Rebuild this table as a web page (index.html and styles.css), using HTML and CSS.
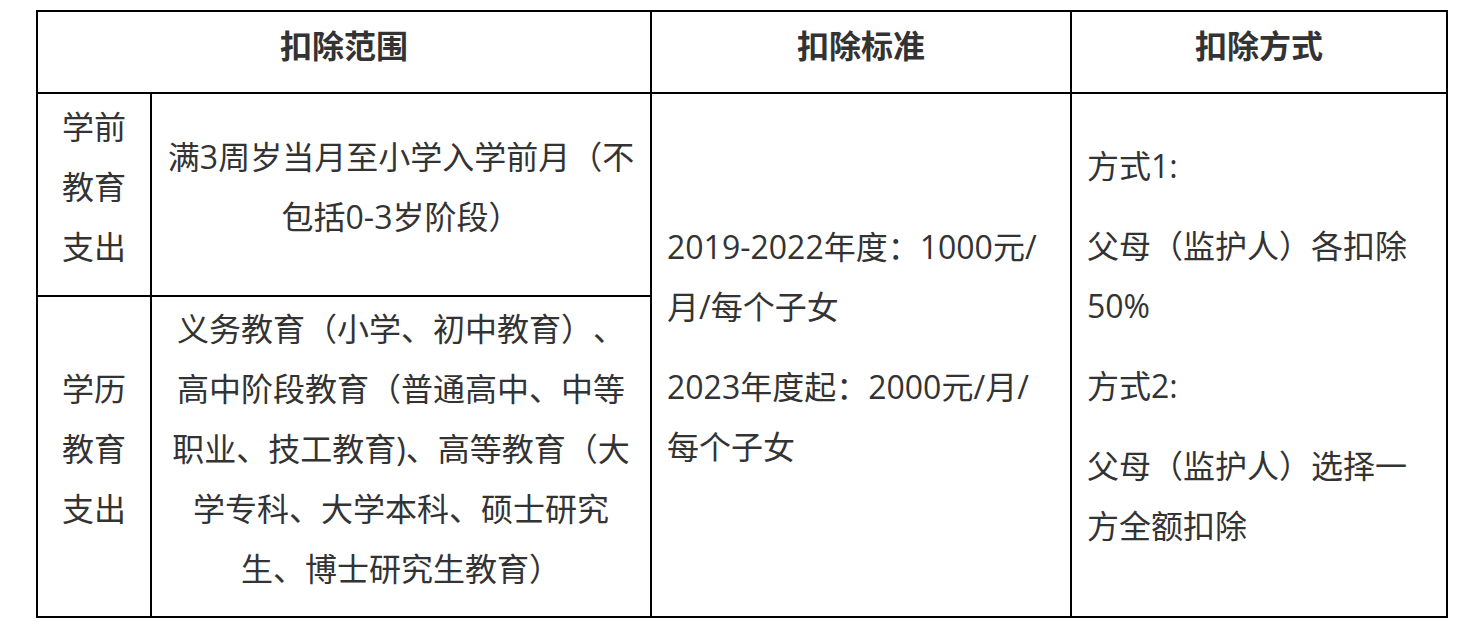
FILE: index.html
```html
<!DOCTYPE html>
<html lang="zh-CN">
<head>
<meta charset="utf-8">
<title>子女教育专项附加扣除</title>
<link rel="stylesheet" href="styles.css">
</head>
<body>
<table class="deduction">
  <colgroup>
    <col class="col-kind">
    <col class="col-scope">
    <col class="col-std">
    <col class="col-way">
  </colgroup>
  <thead>
    <tr class="head-row">
      <th colspan="2">扣除范围</th>
      <th>扣除标准</th>
      <th>扣除方式</th>
    </tr>
  </thead>
  <tbody>
    <tr class="row-pre">
      <td class="kind">学前教育支出</td>
      <td class="scope">满3周岁当月至小学入学前月（不包括0-3岁阶段）</td>
      <td class="std" rowspan="2">
        <p>2019-2022年度：1000元/月/每个子女</p>
        <p>2023年度起：2000元/月/每个子女</p>
      </td>
      <td class="way" rowspan="2">
        <p>方式1:</p>
        <p>父母（监护人）各扣除50%</p>
        <p>方式2:</p>
        <p>父母（监护人）选择一方全额扣除</p>
      </td>
    </tr>
    <tr class="row-edu">
      <td class="kind">学历教育支出</td>
      <td class="scope">义务教育（小学、初中教育）、高中阶段教育（普通高中、中等职业、技工教育)、高等教育（大学专科、大学本科、硕士研究生、博士研究生教育）</td>
    </tr>
  </tbody>
</table>
</body>
</html>
```
FILE: styles.css
```css
html, body {
  margin: 0;
  padding: 0;
  background: #ffffff;
}

body {
  padding: 10px 0 0 36px;
  font-family: "Open Sans", "Noto Sans CJK SC", sans-serif;
  font-size: 32px;
  line-height: 60px;
  color: #333333;
  text-spacing-trim: space-all;
}

.deduction {
  border-collapse: collapse;
  table-layout: fixed;
  width: 1412px;
  border: 2px solid #000000;
}

.col-kind { width: 114px; }
.col-scope { width: 500px; }
.col-std { width: 420px; }
.col-way { width: 376px; }

.deduction th,
.deduction td {
  border: 2px solid #000000;
  padding: 0 15px 16px;
  vertical-align: middle;
  text-align: center;
  font-weight: 400;
}

.deduction th {
  font-family: "Noto Sans CJK SC", sans-serif;
  font-weight: 700;
}

.head-row { height: 82px; }
.row-pre { height: 203px; }
.row-edu { height: 321px; }

.deduction td.scope {
  padding-left: 14px;
  padding-right: 14px;
}

.deduction td.std,
.deduction td.way {
  vertical-align: top;
  text-align: left;
  padding-bottom: 0;
}

.deduction td.std { padding-top: 123px; }
.deduction td.way { padding-top: 42px; }

.deduction p {
  margin: 0;
}

.deduction p + p {
  margin-top: 20px;
}
```
